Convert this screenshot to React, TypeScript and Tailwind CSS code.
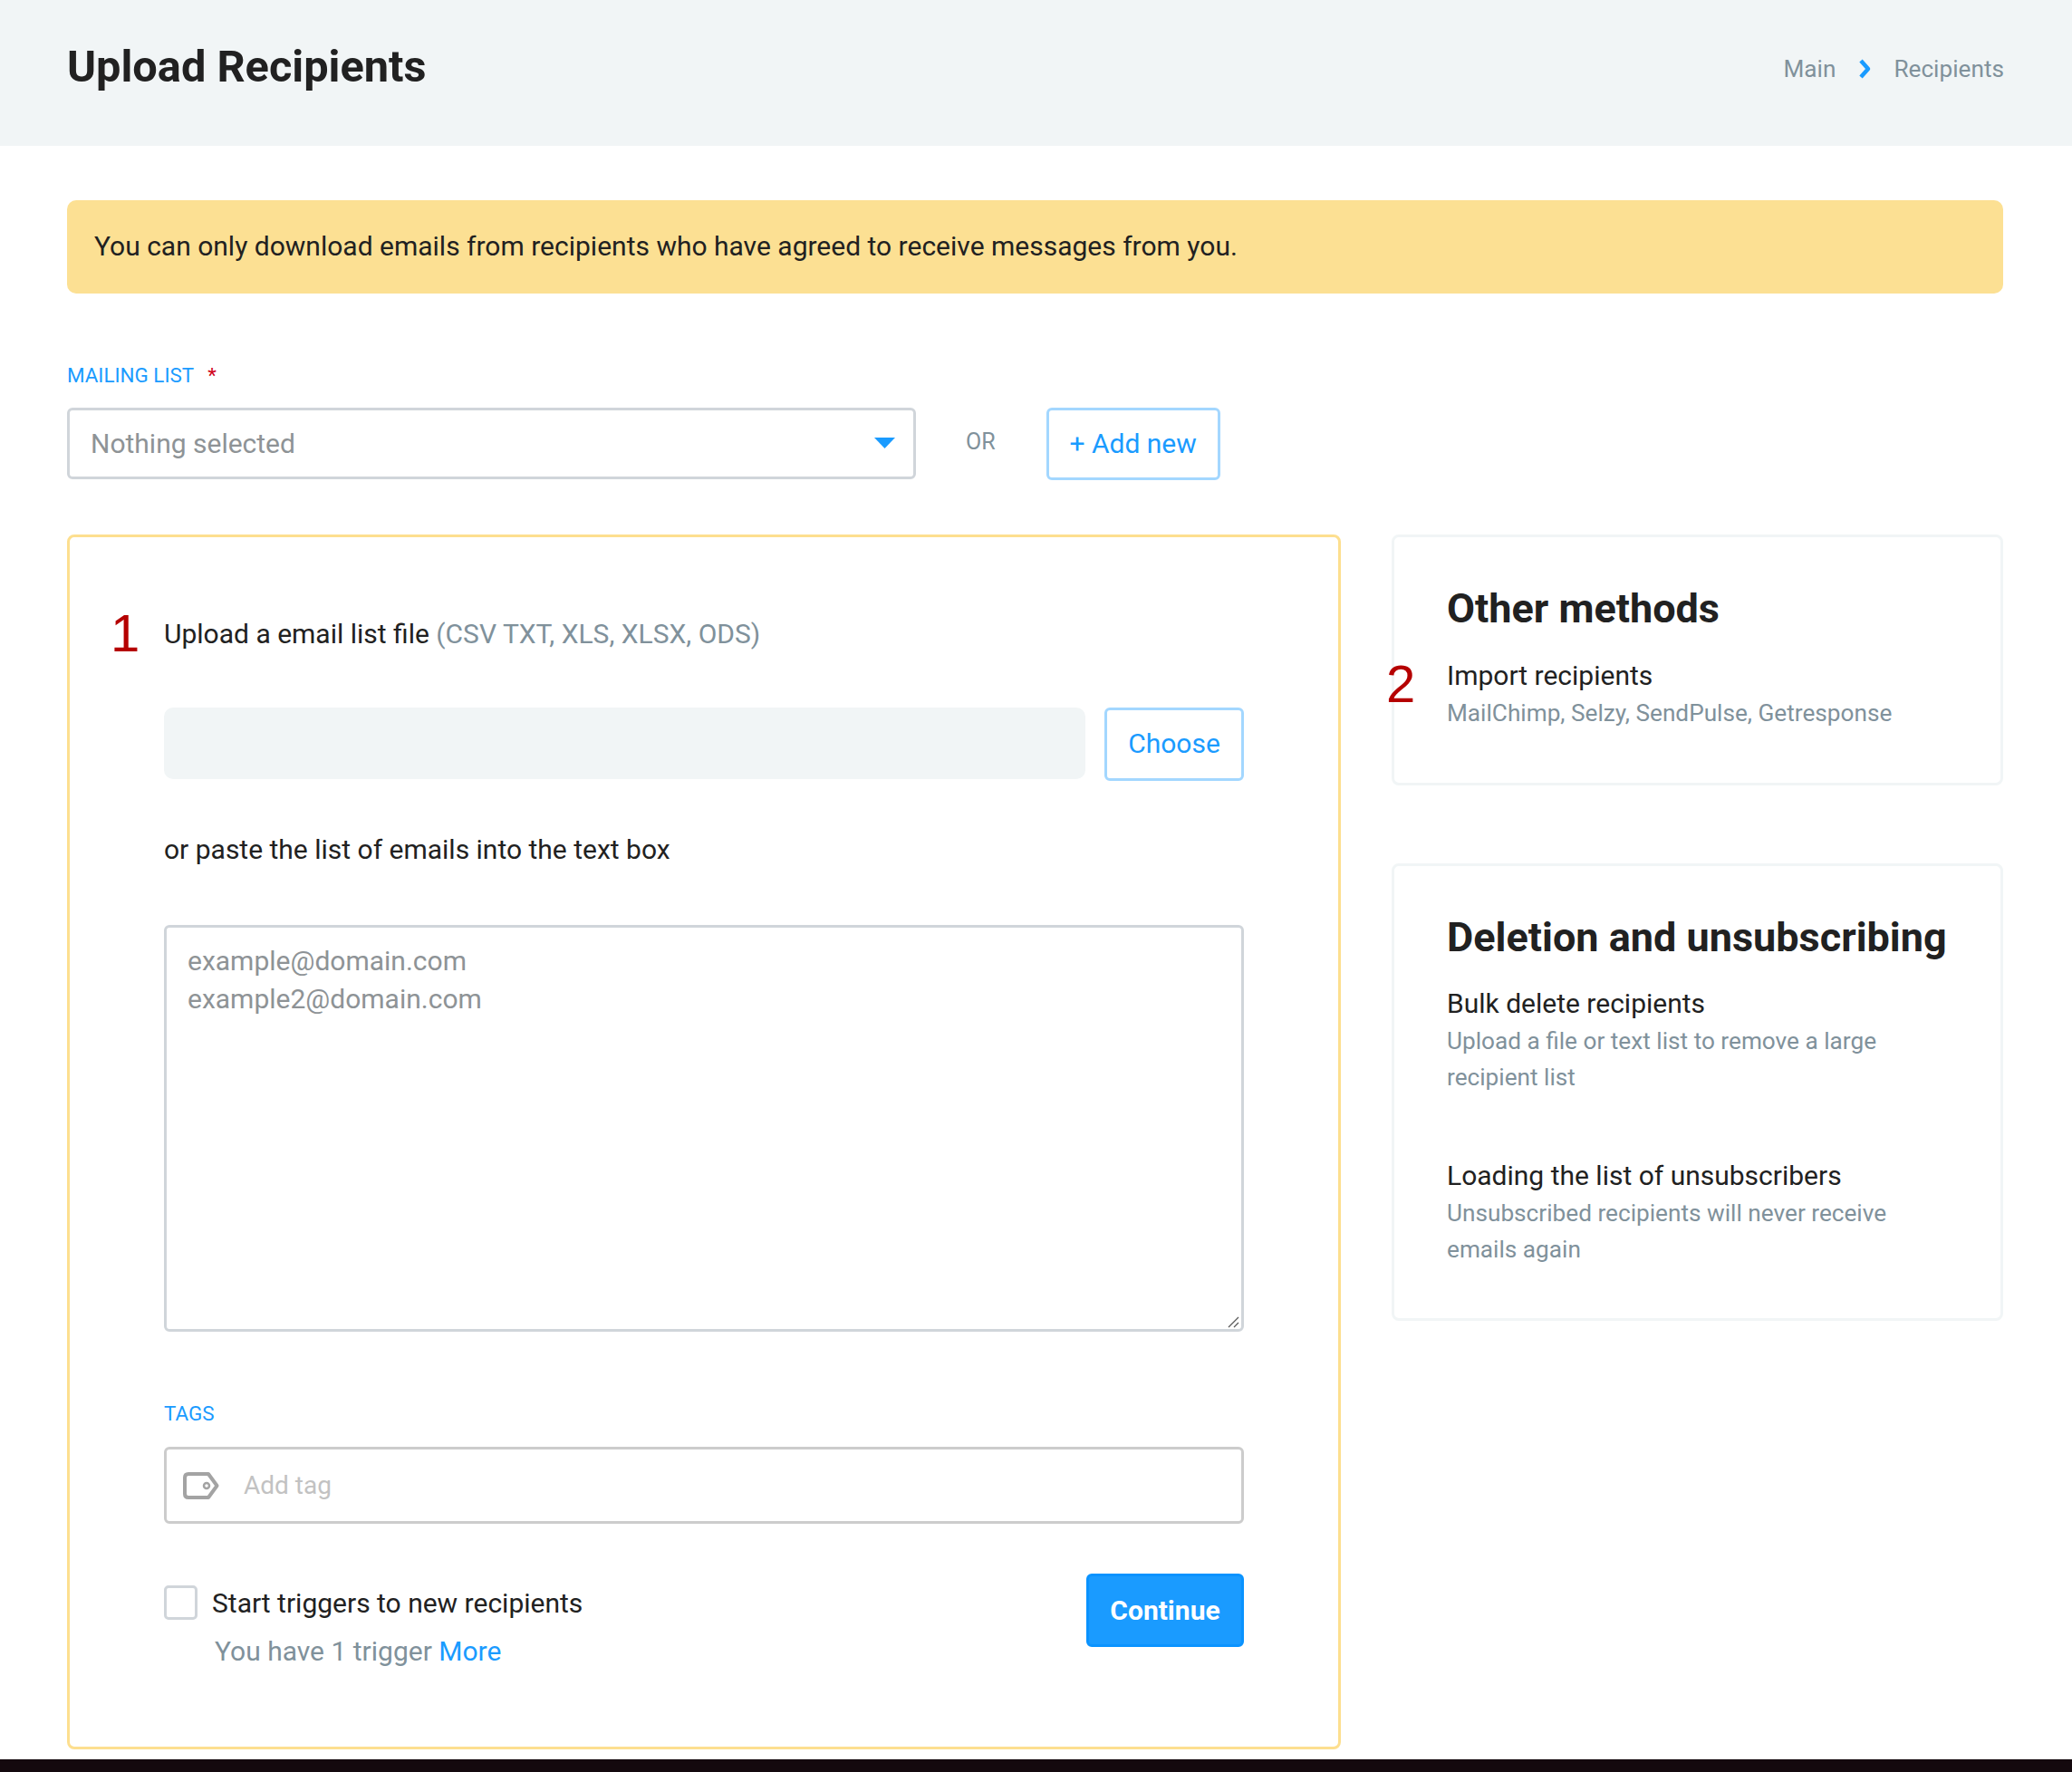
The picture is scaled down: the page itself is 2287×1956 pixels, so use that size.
export default function App() {
  return (
    <div className="w-[2287px] h-[1956px] bg-white flex flex-col font-['Roboto',sans-serif] text-[#212529] overflow-hidden">
      <header className="h-[161px] shrink-0 bg-[#f1f5f6] pl-[74px] pr-[75px] flex items-start justify-between">
        <h1 className="mt-[44px] text-[48.7px] leading-[60px] font-bold text-[#212121]">Upload Recipients</h1>
        <nav className="mt-[59px] flex items-center text-[26.2px] leading-[34px] text-[#80919b]">
          <span>Main</span>
          <svg className="ml-[25px] mr-[24px]" width="15" height="24" viewBox="0 0 15 24" fill="none">
            <path d="M3 3 L11 12 L3 21" stroke="#1a9bff" strokeWidth="4.5" strokeLinejoin="round" />
          </svg>
          <span>Recipients</span>
        </nav>
      </header>

      <main className="flex-1 pl-[74px] pr-[76px] flex flex-col">
        <div className="mt-[60px] h-[103px] shrink-0 rounded-[10px] bg-[#fce093] pl-[30px] pb-[2px] flex items-center text-[30px] text-[#212121]">
          You can only download emails from recipients who have agreed to receive messages from you.
        </div>

        <div className="mt-[76px] h-[30px] flex items-center text-[22.4px] text-[#1a9bff]">
          MAILING LIST<span className="ml-[15px] text-[#d0021b]">*</span>
        </div>
        <div className="mt-[20px] flex items-start">
          <div className="w-[937px] h-[79px] rounded-[6px] border-[3px] border-[#d0d5da] pl-[23px] pr-[20px] pb-[1px] flex items-center justify-between text-[30px] text-[#8e9396]">
            <span>Nothing selected</span>
            <svg width="23" height="12" viewBox="0 0 23 12"><path d="M0 0 H23 L11.5 12 Z" fill="#1a9bff" /></svg>
          </div>
          <span className="ml-[55px] mt-[22px] text-[25px] leading-[32px] text-[#80919b]">OR</span>
          <button className="ml-[56px] w-[192px] h-[80px] rounded-[6px] border-[3px] border-[#a3d7ff] bg-white pb-[2px] text-[30px] text-[#1a9bff]">+ Add new</button>
        </div>

        <div className="mt-[60px] flex items-start justify-between">
          <section className="relative w-[1406px] h-[1341px] rounded-[8px] border-[3px] border-[#fddf8f] pl-[104px] pr-[104px] pt-[86px]">
            <span className="absolute left-[45px] top-[73px] text-[58px] leading-[66px] font-['Liberation_Sans',sans-serif] text-[#b50000]">1</span>
            <p className="h-[40px] flex items-center text-[30px] whitespace-pre text-[#212121]">Upload a email list file <span className="text-[#80919b]">(CSV TXT, XLS, XLSX, ODS)</span></p>
            <div className="mt-[62px] flex items-start justify-between">
              <div className="w-[1017px] h-[79px] rounded-[10px] bg-[#f1f5f6]" />
              <button className="w-[154px] h-[81px] rounded-[6px] border-[3px] border-[#a3d7ff] bg-white pb-[2px] text-[30px] text-[#1a9bff]">Choose</button>
            </div>
            <p className="mt-[55px] h-[40px] flex items-center text-[30px] text-[#212121]">or paste the list of emails into the text box</p>
            <div className="relative mt-[64px]">
              <textarea
                className="block w-full h-[449px] resize-none rounded-[6px] border-[3px] border-[#d0d5da] px-[23px] py-[16px] text-[30px] leading-[42px] outline-none placeholder:text-[#8e9396]"
                placeholder={"example@domain.com\nexample2@domain.com"}
              />
              <svg className="absolute right-[5px] bottom-[4px]" width="13" height="13" viewBox="0 0 13 13" fill="none">
                <path d="M1 12 L12 1 M7 12 L12 7" stroke="#5a5a5a" strokeWidth="1.3" />
              </svg>
            </div>
            <div className="mt-[76px] h-[30px] flex items-center text-[22.4px] text-[#1a9bff]">TAGS</div>
            <div className="mt-[21px] h-[85px] rounded-[6px] border-[3px] border-[#cccccc] pl-[18px] flex items-center">
              <svg width="40" height="30" viewBox="0 0 40 30" fill="none">
                <path d="M6 2 H28 L37.5 15 L28 28 H6 Q2 28 2 24 V6 Q2 2 6 2 Z" stroke="#a3a3a3" strokeWidth="4" strokeLinejoin="round" />
                <circle cx="26" cy="15" r="3" stroke="#a3a3a3" strokeWidth="2.5" />
              </svg>
              <input className="ml-[27px] flex-1 text-[28px] outline-none placeholder:text-[#c2c2c2]" placeholder="Add tag" />
            </div>
            <div className="mt-[55px] flex items-start justify-between">
              <div>
                <div className="mt-[9px] flex items-center">
                  <span className="w-[37px] h-[38px] rounded-[5px] border-[3px] border-[#d0d5da] bg-white" />
                  <span className="ml-[16px] pt-[1px] text-[30px] text-[#212121]">Start triggers to new recipients</span>
                </div>
                <p className="mt-[8px] ml-[56px] text-[30px] text-[#80919b]">You have 1 trigger <span className="text-[#1a9bff]">More</span></p>
              </div>
              <button className="w-[174px] h-[81px] rounded-[6px] border-[3px] border-[#0a93ff] bg-[#1a9bff] text-[30px] font-bold text-white">Continue</button>
            </div>
          </section>

          <aside className="w-[675px] flex flex-col gap-[86px]">
            <Card className="h-[277px] relative">
              <span className="absolute left-[-9px] top-[129px] text-[58px] leading-[66px] font-['Liberation_Sans',sans-serif] text-[#b50000]">2</span>
              <h2 className="text-[45px] leading-[56px] font-bold text-[#212121]">Other methods</h2>
              <Item title="Import recipients" lines={["MailChimp, Selzy, SendPulse, Getresponse"]} />
            </Card>
            <Card className="h-[505px]">
              <h2 className="-mb-[1px] text-[45px] leading-[56px] font-bold text-[#212121]">Deletion and unsubscribing</h2>
              <Item title="Bulk delete recipients" lines={["Upload a file or text list to remove a large", "recipient list"]} />
              <div className="mt-[69px]">
                <Item title="Loading the list of unsubscribers" lines={["Unsubscribed recipients will never receive", "emails again"]} />
              </div>
            </Card>
          </aside>
        </div>
      </main>

      <footer className="h-[14px] shrink-0 bg-[#14090e]" />
    </div>
  );
}

function Card({ className, children }: { className: string; children: React.ReactNode }) {
  return (
    <section className={"w-full rounded-[8px] border-[3px] border-[#f1f5f6] pl-[58px] pr-[40px] pt-[51px] " + className}>
      {children}
    </section>
  );
}

function Item({ title, lines }: { title: string; lines: string[] }) {
  return (
    <div className="mt-[26px]">
      <div className="text-[30px] leading-[40px] text-[#212121]">{title}</div>
      <div className="mt-[1px] text-[26.2px] leading-[40px] text-[#80919b]">
        {lines.map((l) => (
          <div key={l}>{l}</div>
        ))}
      </div>
    </div>
  );
}
